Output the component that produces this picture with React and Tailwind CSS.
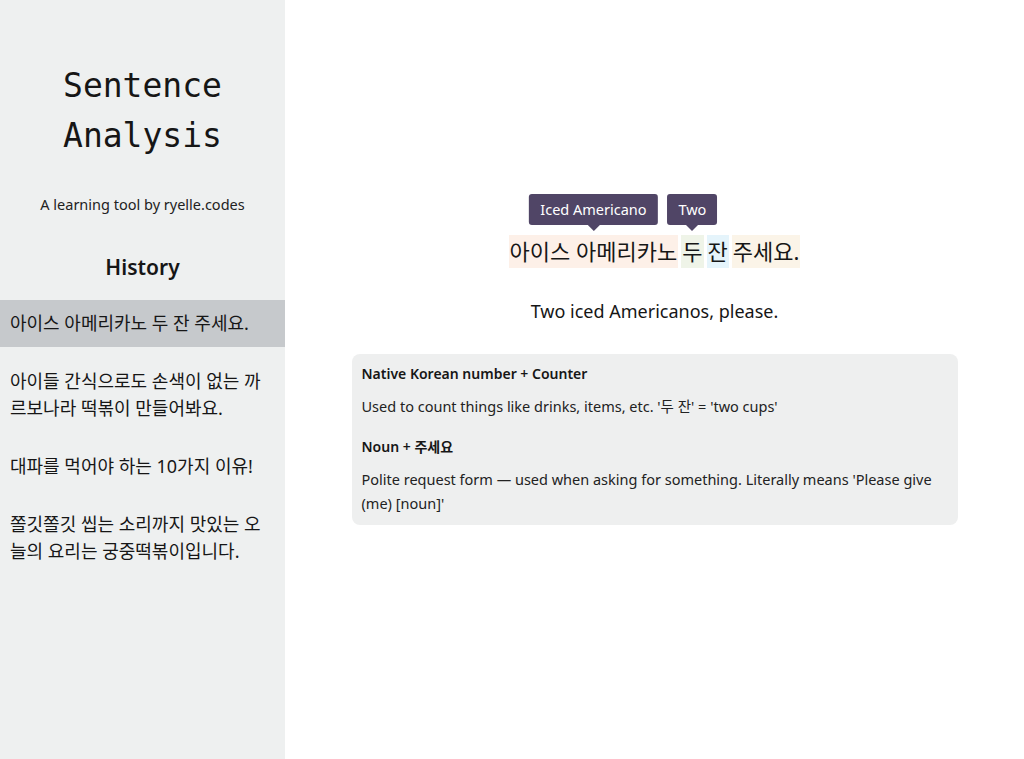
import React from 'react';

const history = [
    '아이스 아메리카노 두 잔 주세요.',
    '아이들 간식으로도 손색이 없는 까르보나라 떡볶이 만들어봐요.',
    '대파를 먹어야 하는 10가지 이유!',
    '쫄깃쫄깃 씹는 소리까지 맛있는 오늘의 요리는 궁중떡볶이입니다.',
];

const segments = [
    { text: '아이스 아메리카노', bg: 'bg-[#fdf0e8]', tip: 'Iced Americano' },
    { text: '두', bg: 'bg-[#eff4e8]', tip: 'Two' },
    { text: '잔', bg: 'bg-[#e5f4fb]' },
    { text: '주세요.', bg: 'bg-[#fbf4e8]' },
];

const notes = [
    {
        title: 'Native Korean number + Counter',
        body: "Used to count things like drinks, items, etc. '두 잔' = 'two cups'",
    },
    {
        title: 'Noun + 주세요',
        body: "Polite request form — used when asking for something. Literally means 'Please give (me) [noun]'",
    },
];

const sans = "font-['Noto_Sans','Noto_Sans_CJK_KR',sans-serif]";

const App = () => {
    return (
        <div className={`flex min-h-[759px] w-full text-[#161616] ${sans}`}>
            {/* sidebar */}
            <aside className="w-[285px] shrink-0 bg-[#eef0f0] pt-[61px]">
                <h1 className="text-center font-['DejaVu_Sans_Mono',monospace] text-[33px] leading-[50px] font-normal px-10">
                    Sentence Analysis
                </h1>
                <p className="mt-[33px] text-center text-[14.5px] leading-5 text-[#222]">
                    A learning tool by ryelle.codes
                </p>
                <h2 className="mt-[39px] text-center text-[21px] leading-7 font-semibold">History</h2>
                <ul className="mt-[19px] flex flex-col gap-[11px]">
                    {history.map((item, i) => (
                        <li
                            key={i}
                            className={`px-[10px] py-[10px] text-[18px] leading-[27px] ${i === 0 ? 'bg-[#c6c9cc]' : ''}`}
                        >
                            {item}
                        </li>
                    ))}
                </ul>
            </aside>

            {/* main */}
            <main className="flex-1 flex flex-col items-center pt-[235px]">
                <div className="flex gap-[3px] text-[22px] leading-[33px]">
                    {segments.map((s, i) => (
                        <span key={i} className={`relative px-[1px] ${s.bg}`}>
                            {s.tip && (
                                <span className="absolute bottom-[43px] left-1/2 -translate-x-1/2 whitespace-nowrap rounded-[3px] bg-[#504566] px-[11px] text-[14.5px] leading-[31px] text-white">
                                    {s.tip}
                                    <span className="absolute left-1/2 top-full -translate-x-1/2 border-x-[6px] border-t-[6px] border-x-transparent border-t-[#504566]" />
                                </span>
                            )}
                            {s.text}
                        </span>
                    ))}
                </div>
                <p className="mt-[30px] text-[18px] leading-[26px]">Two iced Americanos, please.</p>
                <div className="mt-[30px] w-[606px] rounded-lg bg-[#eeefef] px-[10px] pt-[8px] pb-[10px]">
                    {notes.map((n, i) => (
                        <div key={i} className={i > 0 ? 'mt-[17px]' : ''}>
                            <h3 className="text-[14px] leading-[24px] font-semibold">{n.title}</h3>
                            <p className="mt-[8px] text-[14.5px] leading-[24px] text-[#222]">{n.body}</p>
                        </div>
                    ))}
                </div>
            </main>
        </div>
    );
};

export default App;
